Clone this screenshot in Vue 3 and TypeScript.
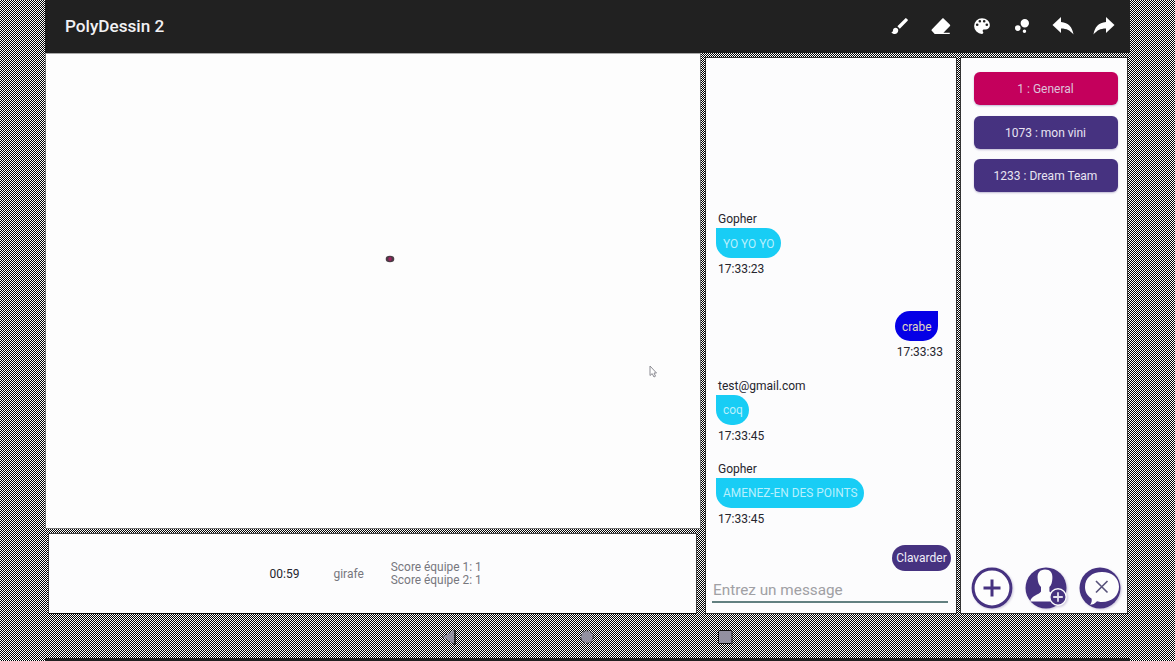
<script setup lang="ts">
interface Message {
  author: string
  text: string
  time: string
  own?: boolean
}
interface Room {
  label: string
  active?: boolean
}

const rooms: Room[] = [
  { label: '1 : General', active: true },
  { label: '1073 : mon vini' },
  { label: '1233 : Dream Team' },
]
const messages: Message[] = [
  { author: 'Gopher', text: 'YO YO YO', time: '17:33:23' },
  { author: '', text: 'crabe', time: '17:33:33', own: true },
  { author: 'test@gmail.com', text: 'coq', time: '17:33:45' },
  { author: 'Gopher', text: 'AMENEZ-EN DES POINTS', time: '17:33:45' },
]
const tools: { name: string; path: string }[] = [
  { name: 'brush', path: 'M7 14c-1.66 0-3 1.34-3 3 0 1.31-1.16 2-2 2 .92 1.22 2.49 2 4 2 2.21 0 4-1.79 4-4 0-1.66-1.34-3-3-3zm13.71-9.37l-1.34-1.34a1 1 0 0 0-1.41 0L9 12.25 11.75 15l8.96-8.96a1 1 0 0 0 0-1.41z' },
  { name: 'eraser', path: 'M15.2 3.6 22 10.2c.7.7.7 1.5 0 2.2l-7.2 7.3H22V21H4.8L1.7 17.8c-.7-.7-.7-1.4 0-2.1L13.3 3.6c.6-.6 1.3-.6 1.9 0z' },
  { name: 'palette', path: 'M12 3a9 9 0 0 0 0 18c.83 0 1.5-.67 1.5-1.5 0-.39-.15-.74-.39-1.01-.23-.26-.38-.61-.38-.99 0-.83.67-1.5 1.5-1.5H16c2.76 0 5-2.24 5-5 0-4.42-4.03-8-9-8zm-5.5 9a1.5 1.5 0 1 1 0-3 1.5 1.5 0 0 1 0 3zm3-4a1.5 1.5 0 1 1 0-3 1.5 1.5 0 0 1 0 3zm5 0a1.5 1.5 0 1 1 0-3 1.5 1.5 0 0 1 0 3zm3 4a1.5 1.5 0 1 1 0-3 1.5 1.5 0 0 1 0 3z' },
  { name: 'size', path: 'M7.2 11.2a3.2 3.2 0 1 0 0 6.4 3.2 3.2 0 0 0 0-6.4zM14.8 16a2 2 0 1 0 0 4 2 2 0 0 0 0-4zM15.2 4a4.8 4.8 0 1 0 0 9.6 4.8 4.8 0 0 0 0-9.6z' },
  { name: 'undo', path: 'M10 8V3L1.500 11l8.500 8v-4.500c6 0 9 2 12.500 6C21.500 13.500 17.500 8.500 10 8z' },
  { name: 'redo', path: 'M14 8V3l8.500 8-8.500 8v-4.500c-6 0-9 2-12.500 6C2.500 13.500 6.500 8.500 14 8z' },
]
</script>

<template>
  <div class="screen">
    <div class="device">
      <header class="bar">
        <h1 class="title">PolyDessin 2</h1>
        <nav class="tools">
          <svg v-for="t in tools" :key="t.name" :class="t.name" viewBox="0 0 24 24"><path :d="t.path" /></svg>
        </nav>
      </header>
      <main class="body">
        <section class="game">
          <div class="canvas">
            <svg class="stroke" viewBox="0 0 10 8"><ellipse cx="5" cy="4" rx="4.300" ry="3.200" fill="#4b3b45" /><ellipse cx="5" cy="4" rx="1.700" ry="2" fill="#a02060" /></svg>
            <svg class="cursor" viewBox="0 0 8 13"><path d="M1 1v9.500l2.200-1.900L5 12l1.500-.8L5 8h2.500z" fill="#fff" stroke="#8b8b92" stroke-width="1" /></svg>
          </div>
          <div class="info">
            <span class="timer">00:59</span>
            <span class="word">girafe</span>
            <div class="scores"><div>Score équipe 1: 1</div><div>Score équipe 2: 1</div></div>
          </div>
        </section>
        <section class="chat">
          <div class="messages">
            <div v-for="(m, i) in messages" :key="i" class="message" :class="{ own: m.own }">
              <div class="author">{{ m.author }}</div>
              <div class="bubble">{{ m.text }}</div>
              <div class="time">{{ m.time }}</div>
            </div>
          </div>
          <button class="send">Clavarder</button>
          <div class="entry">Entrez un message</div>
        </section>
        <aside class="rooms">
          <button v-for="r in rooms" :key="r.label" class="room" :class="{ active: r.active }">{{ r.label }}</button>
          <div class="actions">
            <svg viewBox="0 0 42 42">
              <circle cx="21" cy="21" r="18.900" fill="#fdfdfd" stroke="#463280" stroke-width="3" />
              <path d="M21 12.500v17M12.500 21h17" stroke="#463280" stroke-width="3" />
            </svg>
            <svg viewBox="0 0 42 42">
              <circle cx="21" cy="21" r="20.500" fill="#463280" />
              <path d="M20 2.500c5.200 0 7.700 3.300 7.400 8.500-.2 4.500-1 7-3 9v4.500c2 2 5 2.500 8 5v5H5.200c1.300-6.500 8.600-6.500 10.800-10V20c-2.200-2-3.200-5-3.400-9-.3-5 2.200-8.500 7.400-8.500z" fill="#fdfdfd" />
              <circle cx="33" cy="30" r="8.200" fill="#463280" stroke="#fdfdfd" stroke-width="1.400" />
              <path d="M33 25.200v9.600M28.200 30h9.600" stroke="#e4e0ee" stroke-width="1.800" />
            </svg>
            <svg viewBox="0 0 42 42">
              <circle cx="21" cy="21" r="20.500" fill="#463280" />
              <path d="M23 5c10 0 17 6 17 14.800S33 35 23 35c-2 0-3.500-.2-5-.7-2 2.500-4.500 3.500-7 3.500 1.500-1.700 2.200-4 1.500-6.300C8.500 29 6 25 6 20 6 11 13 5 23 5z" fill="#fdfdfd" />
              <path d="m17 14 11.500 11.500M28.500 14 17 25.500" stroke="#57527a" stroke-width="1.600" />
            </svg>
          </div>
        </aside>
      </main>
      <footer class="system">
        <svg viewBox="0 0 16 16"><path d="M1.500 8 13 1v14z" fill="#9290a0" /><path d="M1.500 8 13 1M1.500 8 13 15" stroke="#111" stroke-dasharray="1 3" /><path d="M14 1v15" stroke="#111" stroke-width="1.500" /></svg>
        <svg viewBox="0 0 16 16"><circle cx="8" cy="8" r="6.200" fill="#9290a0" stroke="#222" stroke-width="1" stroke-dasharray="2 2" /></svg>
        <svg viewBox="0 0 16 16"><rect x="1.500" y="1.500" width="13.500" height="13" rx="1" fill="#9290a0" stroke="#111" /></svg>
      </footer>
    </div>
  </div>
</template>

<style>
body { margin: 0; overflow: hidden; }
</style>

<style scoped>
* { box-sizing: border-box; }
.screen {
  width: 1175px;
  height: 661px;
  overflow: hidden;
  background: repeating-conic-gradient(#000 0 25%, #fff 0 50%) 0 0 / 2px 2px;
  font: 12px/14px Roboto, sans-serif;
  color: #25252d;
}
.device {
  display: flex;
  flex-direction: column;
  width: 1085px;
  height: 661px;
  margin-left: 45px;
}
.bar {
  display: flex;
  flex: 0 0 53px;
  justify-content: space-between;
  align-items: center;
  padding: 0 14px 1px 20px;
  background: #212121;
}
.title { margin: 0; font-size: 17.150px; line-height: 24px; font-weight: 500; color: #f1f1f4; }
.tools { display: flex; gap: 16.800px; }
.tools svg { width: 24px; height: 24px; padding: 1.500px; fill: #fff; }
.tools .undo, .tools .redo { padding: 0; }
.body { display: flex; flex: 0 0 561px; }
.game { width: 656px; display: flex; flex-direction: column; gap: 4px; }
.canvas {
  position: relative;
  height: 476px;
  background: #fdfdfd;
  border: 1px solid #777;
  border-top-color: #aaa;
}
.stroke { position: absolute; left: 339px; top: 201px; width: 10px; height: 8px; }
.cursor { position: absolute; left: 603px; top: 311px; width: 8px; height: 13px; }
.info {
  display: flex;
  align-items: center;
  width: 649px;
  height: 81px;
  margin-left: 3px;
  padding-left: 220.500px;
  background: #fcfcfd;
  border: 1px solid #444;
  border-bottom-color: #111;
}
.word { margin-left: 34px; color: #77777d; }
.scores { margin-left: 27px; padding-top: 1px; color: #77777d; font-size: 11.900px; line-height: 13.500px; }
.chat {
  display: flex;
  flex-direction: column;
  width: 252px;
  height: 557px;
  margin: 4px 0 0 4px;
  padding: 154px 5px 0 6px;
  background: #fcfcfd;
  border: 1px solid #333;
}
.messages { flex: 0 0 333px; padding-left: 4px; }
.message { display: flex; flex-direction: column; align-items: flex-start; height: 83.300px; }
.message.own { align-items: flex-end; padding-right: 8px; }
.author { height: 16px; padding-left: 2px; }
.bubble {
  height: 30px;
  padding: 8.500px 6.500px 0 7px;
  border-radius: 0 15px 15px 15px;
  background: #18cdf5;
  color: #b8f0fd;
  font-size: 11.900px;
}
.own .bubble { margin-right: 5px; border-radius: 15px 0 15px 15px; background: #0500e6; color: #e0d6c0; }
.time { padding: 4px 0 0 2px; }
button { border: 0; font: inherit; }
.send {
  align-self: flex-end;
  flex: 0 0 26px;
  width: 59px;
  padding: 0;
  border-radius: 13px;
  background: #463280;
  color: #f1eef8;
}
.entry {
  width: 236px;
  height: 32px;
  padding: 9px 0 0 1px;
  border-bottom: 2px solid #628080;
  color: #a0a0a4;
  font-size: 15.300px;
  line-height: 20px;
}
.rooms {
  display: flex;
  flex-direction: column;
  align-items: center;
  gap: 10.500px;
  width: 168px;
  height: 557px;
  margin: 4px 0 0 3px;
  padding: 14px 0 4px 3px;
  background: #fcfcfd;
  border: 1px solid #333;
}
.room {
  flex: 0 0 33px;
  width: 144px;
  padding: 1px 0 0;
  border-radius: 6px;
  background: #463280;
  color: #e8e4f2;
  box-shadow: 0 1px 2px #46328055;
}
.room.active { background: #c4005c; color: #dec2da; }
.actions { display: flex; gap: 12px; margin-top: auto; }
.actions svg { width: 42px; height: 42px; filter: drop-shadow(1px 1px 1px #46328044); }
.system {
  display: flex;
  align-items: center;
  flex: 0 0 47px;
  gap: 122px;
  padding: 2px 0 0 396px;
  border-bottom: 3px solid #212121;
}
.system svg { width: 16px; height: 16px; }
</style>
